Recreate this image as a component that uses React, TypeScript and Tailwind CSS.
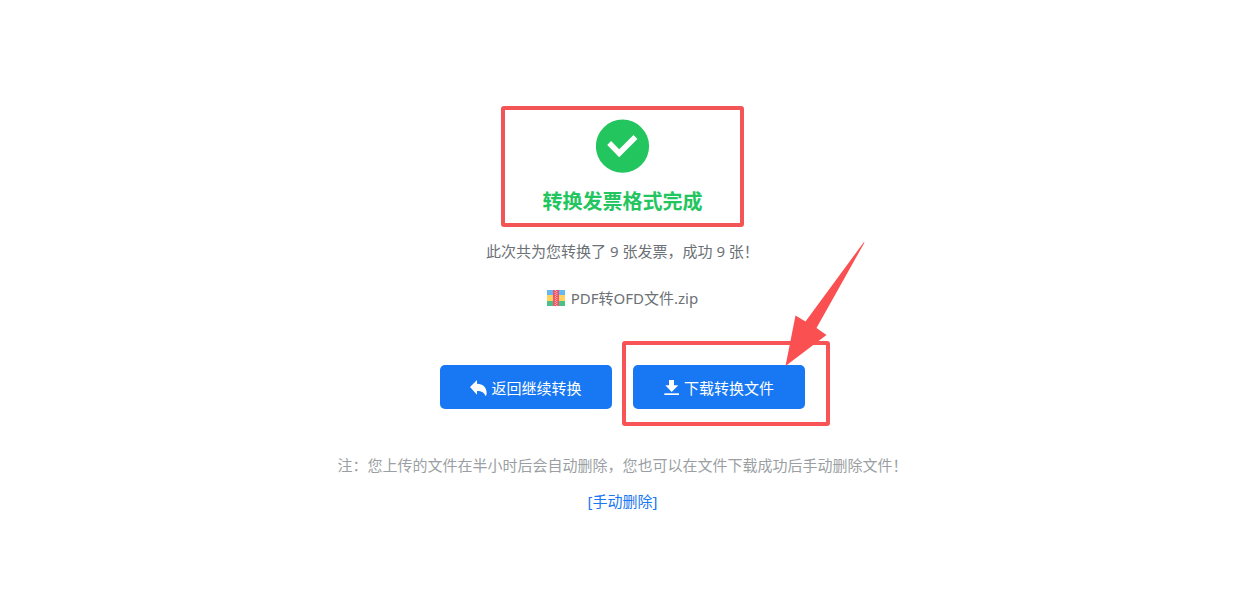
function CheckIcon() {
  return (
    <svg viewBox="0 0 54 54" className="h-[54px] w-[54px]" aria-hidden="true">
      <circle cx="26.5" cy="27.2" r="26.6" fill="#22c55e" />
      <path d="M11.2 26 15.1 22.1 23.2 30.2 37.5 15.9 41.4 19.9 23.2 38.3Z" fill="#fff" />
    </svg>
  );
}

function ReplyIcon() {
  return (
    <svg viewBox="1 2 51 51" className="h-[17px] w-[17px]" fill="currentColor" aria-hidden="true">
      <path d="M1 23 22 2V13C40 13 51 24 51 41C51 45 50 48 48 51C44 40 36 35 22 35V46Z" />
    </svg>
  );
}

function DownloadIcon() {
  return (
    <svg viewBox="1 1 48 48" className="h-4 w-4" fill="currentColor" aria-hidden="true">
      <path d="M16 1H31V17H44L24 37 5 17H16Z" />
      <path d="M2 41H46V46H2Z" />
    </svg>
  );
}

function ZipIcon() {
  return (
    <svg viewBox="0 0 18 16" className="h-4 w-[18px]" aria-hidden="true">
      <path d="M0 0H18V5H0Z" fill="#64b9f4" />
      <path d="M0 5H18V11H0Z" fill="#ffd25e" />
      <path d="M0 11H18V16H0Z" fill="#4cc08a" />
      <path d="M6 0H12V16H6Z" fill="#ef5367" />
      <path d="M8.3 0V16M9.8 1V16" stroke="#fbc5c5" strokeWidth="1" strokeDasharray="1 1" />
    </svg>
  );
}

function Arrow() {
  return (
    <svg
      viewBox="0 0 80 126"
      className="pointer-events-none absolute -top-[124px] left-[152px] h-[126px] w-20"
      fill="#fb5052"
      aria-hidden="true"
    >
      <path d="M79.5 1.5 31.5 87 41.5 94 0.5 125 10.5 74.5 20.5 80.5 78.8 1.2Z" />
    </svg>
  );
}

const buttonClass =
  "flex h-11 w-[172px] items-center justify-center gap-1 rounded-[5px] bg-[#1877f2] pt-0.5 text-white hover:bg-[#0f68dc]";

export default function App() {
  return (
    <main className="flex min-h-screen flex-col items-center bg-white pt-[106px] pb-10 pl-[11px] font-['Noto_Sans','Noto_Sans_CJK_SC',sans-serif] text-[15px] leading-6 text-[#6c7176]">
      <section className="flex w-[243px] flex-col items-center rounded-[3px] border-4 border-[#f35456] pt-[9px] pb-1.5">
        <CheckIcon />
        <h1 className="mt-3.5 text-[20px] leading-[30px] font-bold text-[#22c55e]">
          转换发票格式完成
        </h1>
      </section>

      <p className="mt-3">此次共为您转换了 9 张发票，成功 9 张！</p>

      <div className="mt-[23px] flex items-center gap-1.5">
        <ZipIcon />
        <span>PDF转OFD文件.zip</span>
      </div>

      <div className="mt-[55px] flex gap-[21px]">
        <button type="button" className={buttonClass}>
          <ReplyIcon />
          返回继续转换
        </button>
        <div className="relative">
          <button type="button" className={buttonClass}>
            <DownloadIcon />
            下载转换文件
          </button>
          <div className="pointer-events-none absolute -top-6 -left-[11px] h-[85px] w-52 rounded-[3px] border-4 border-[#f85355]" />
          <Arrow />
        </div>
      </div>

      <p className="mt-11 text-[#9b9fa4]">
        注：您上传的文件在半小时后会自动删除，您也可以在文件下载成功后手动删除文件！
      </p>
      <a href="#delete" className="mt-3 text-[#1877f2]">
        [手动删除]
      </a>
    </main>
  );
}
